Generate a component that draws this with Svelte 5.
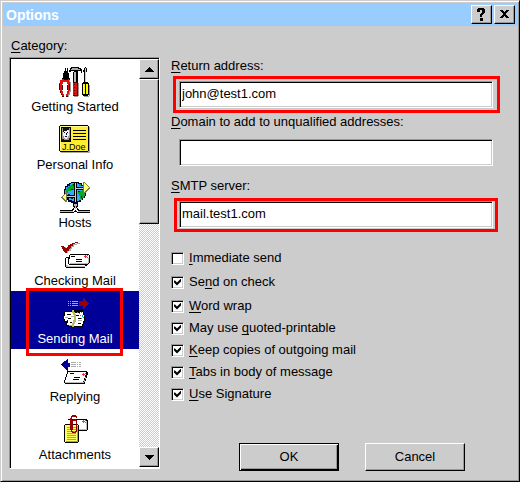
<script>
  let selected = $state('Sending Mail');
  let returnAddress = $state('john@test1.com');
  let domain = $state('');
  let smtpServer = $state('mail.test1.com');

  const categories = [
    'Getting Started',
    'Personal Info',
    'Hosts',
    'Checking Mail',
    'Sending Mail',
    'Replying',
    'Attachments'
  ];

  // label is split around its underlined access key
  let options = $state([
    { before: '', key: 'I', after: 'mmediate send', checked: false },
    { before: 'Se', key: 'n', after: 'd on check', checked: true },
    { before: '', key: 'W', after: 'ord wrap', checked: true },
    { before: 'May use ', key: 'q', after: 'uoted-printable', checked: true },
    { before: '', key: 'K', after: 'eep copies of outgoing mail', checked: true },
    { before: '', key: 'T', after: 'abs in body of message', checked: true },
    { before: '', key: 'U', after: 'se Signature', checked: true }
  ]);
</script>

{#snippet icon(name)}
  <svg class="icon" viewBox="0 0 32 32" width="32" height="32" shape-rendering="crispEdges" aria-hidden="true">
    {#if name === 'Getting Started'}
      <!-- pliers -->
      <path d="M6 2h1v3h1V2h1v5h1v5h1v2H3v-2h1V7h1V5h1z" fill="#000" />
      <path d="M10 14h1v2h1v10h-1v3h-1v2H7v-1h2v-2h1z" fill="#999" />
      <path d="M3 13h2v1h4v-1h1v3h1v9h-1v3H9v2H7v-2h1v-3h1v-7H8v-2H4v2H3v7h1v3h1v2H3v-2H2v-2H1v-3H0v-6h1v-3h2z" fill="#e01010" />
      <path d="M0 18h1v6H0zM1 25h1v2H1zM2 28h1v1H2zM3 30h2v1H3zM7 30h2v1H7zM3 19h1v5H3zM8 19h1v5H8zM10 18h1v6h-1z" fill="#500" />
      <!-- hammer -->
      <path d="M12 1h8v1h2v1h1v4h-1V5h-3v2h-4V5h-3v1h-2V4h1V2h1z" fill="#000" />
      <path d="M13 2h6v1h2v1h-9V3h1z" fill="#aaa" />
      <path d="M14 6h5v10h-5z" fill="#000" />
      <path d="M15 6h2v10h-2z" fill="#bbb" />
      <path d="M19 17h1v13h-1v1h-4v-1h4z" fill="#999" />
      <path d="M14 16h5v14h-5z" fill="#500" />
      <path d="M14 17h4v12h-4z" fill="#e01010" />
      <path d="M15 18h1v1h-1zM15 21h1v1h-1zM15 24h1v1h-1zM15 27h1v1h-1z" fill="#600" />
      <!-- screwdriver -->
      <path d="M25 2h1V1h1v1h1v4h-1v10h-2V6h-1z" fill="#000" />
      <path d="M26 2h1v14h-1z" fill="#ccc" />
      <path d="M30 19h1v11h-1v1h-5v-1h5z" fill="#999" />
      <path d="M24 16h5v1h1v12h-1v1h-5v-1h-1V17h1z" fill="#000" />
      <path d="M24 18h2v10h-2zM27 18h2v10h-2z" fill="#ff0" />
    {:else if name === 'Personal Info'}
      <path d="M2 3h29v26H2z" fill="#aaa" />
      <path d="M1 1h28v1h1v25h-1v1H1v-1H0V2h1z" fill="#000" />
      <path d="M1 2h28v25H1z" fill="#ffee30" />
      <path d="M1 2h28v1H1zM1 3h1v23H1z" fill="#ffff90" />
      <path d="M2 3h10v15H2z" fill="#000" />
      <path d="M3 4h8v13H3z" fill="#999" />
      <path d="M5 5h4v1h1v6H9v2H8v1H6v-1H5v-2H4V7h1z" fill="#eef" />
      <path d="M4 4h6v2H8v1H5v1H4zM5 8h1v1H5zM8 8h1v1H8zM7 9h1v2H7zM6 12h2v1H6zM3 15h2v1h5v-2h1v3H3z" fill="#111" />
      <path d="M14 6h13v1H14zM14 9h13v1H14zM14 12h13v1H14zM14 15h13v1H14z" fill="#000" />
      <text x="3" y="26" font-size="9" fill="#000">J.Doe</text>
    {:else if name === 'Hosts'}
      <path d="M12 0h8v1h3v2h2v2h1v2h1v7h-1v2h-2v2h-2v2h-3v1h-7v-1H9v-2H7v-2H6v-2H5V7h1V4h2V2h2V1h2z" fill="#003" />
      <path d="M12 1h7v1h3v2h2v3h2v6h-1v3h-2v2h-3v1h-7v-1h-3v-2H8v-2H6V8h1V5h2V3h2V2h1z" fill="#3af" />
      <path d="M10 3h3V2h3v3h-1v3h-3v1H9v2H7V7h1V5h2zM20 2h2v2h-2zM20 9h3v-1h3v6h-1v2h-2v1h-2v-3h-1v-2h-1v-2h1z" fill="#0a2" />
      <path d="M9 3h2v1H9zM14 2h2v2h-2zM12 7h2v1h-2zM19 9h2v1h-2zM22 14h1v2h-1zM9 12h2v1H9zM12 16h2v1h-2z" fill="#023" />
      <path d="M15 0h3v20h-3zM17 5h8v3h-8zM8 13h8v3H8z" fill="#000" />
      <path d="M16 1h1v19h-1zM17 6h8v1h-8zM8 14h8v1H8z" fill="#ccc" />
      <path d="M24 0h2v1h1v1h1v1h1v1h1v1h1v2h-1v1h-1v1h-1v1h-1v1h-1v1h-2z" fill="#774" />
      <path d="M25 1h1v1h1v1h1v1h1v1h1v1h-1v1h-1v1h-1v1h-1v1h-1z" fill="#ffff70" />
      <path d="M8 10H7v1H6v1H5v1H4v1H3v1H2v1h1v1h1v1h1v1h1v1h2z" fill="#774" />
      <path d="M7 12H6v1H5v1H4v2h1v1h1v1h1z" fill="#ffff70" />
      <path d="M14 21h5v4h-1v1h1v1h1v1h11v1H19v-1h-1v-2h-3v2h-1v1H1v-1h12v-1h1v-1h1v-1h-1z" fill="#000" />
      <path d="M15 22h3v2h-3zM16 24h1v3h-1zM1 29h13v1H1zM19 29h12v1H19z" fill="#bbb" />
      <path d="M1 30h14v-1h1v-1h1v1h1v1h13v1H18v-1h-3v1H1z" fill="#000" />
    {:else if name === 'Checking Mail'}
      <path d="M4 7h3v2h2V7h2V5h3V4h4V3h3v1h-3v1h-3v2h-2v2h-1v2H9v2H7v-1H6v-2H5z" fill="#aaa" />
      <path d="M2 6h3v1h1v1h2V7h1V5h2V4h2V3h3V2h3v1h-3v1h-2v2h-2v2h-1v1h-1v2H8v2H6v-1H5v-1H4v-2H3V7H2z" fill="#900" />
      <path d="M7 17h20v2h1v7h-2v2H7v-1H6v-9h1z" fill="#000" />
      <path d="M7 18h19v8H7z" fill="#fff" />
      <path d="M7 27h19v-1H9v-1H7z" fill="#bbb" />
      <path d="M11 14h19v1h1v8h-1v1h-1v1H10v-1H9v-6h1v-3h1z" fill="#000" />
      <path d="M11 15h19v8h-1v1H10v-5h1z" fill="#fff" />
      <path d="M11 23h18v1H11zM29 18h1v5h-1z" fill="#bbb" />
      <path d="M12 16h4v1h-4zM17 19h6v1h-6zM17 21h6v1h-6z" fill="#000" />
      <path d="M26 15h1v1h1v1h-1v1h-1v-1h-1v-1h1zM28 15h1v1h-1zM28 17h1v1h-1z" fill="#e33" />
    {:else if name === 'Sending Mail'}
      <path d="M9 3h1v1H9zM11 3h1v1h-1zM13 3h6v1h-6zM9 5h1v1H9zM11 5h1v1h-1zM13 5h6v1h-6zM9 7h1v1H9zM11 7h1v1h-1zM13 7h6v1h-6z" fill="#aaa" />
      <path d="M24 0h1v1h1v1h1v1h1v1h1v1h1v1h-1v1h-1v1h-1v1h-1v1h-1v1h-1V8h-4V3h4z" fill="#900" />
      <path d="M6 13h8v-1h10v2h1v3h1v7h-1v2h-1v3H10v-1H7v-4H5v-3H4v-4h1v-4h1z" fill="#000" />
      <path d="M6 14h7v1h8v-1h3v3h1v6h-1v3h-1v2H10v-1H8v-4H6v-2H5v-3h1z" fill="#fff" />
      <path d="M8 16h4v1H8zM9 20h3v1H9zM8 22h1v3H8zM11 24h2v1h-2zM17 17h3v1h-3zM19 20h3v1h-3zM19 25h3v1h-3z" fill="#000" />
      <path d="M6 19h3v1H6zM12 18h3v1h-3zM19 22h4v1h-4zM10 27h5v1h-5z" fill="#aaa" />
      <path d="M18 14h1v1h-1zM20 15h1v1h-1zM22 14h1v1h-1zM21 17h1v1h-1zM23 17h1v2h-1zM22 20h1v1h-1zM24 19h1v1h-1z" fill="#0aa" />
      <path d="M13 12h2v2h1v2h1v8h-1v2h-1v3h-2v-4h1v-3h1v-5h-1v-2h-1z" fill="#bb6" />
    {:else if name === 'Replying'}
      <path d="M8 3h1v4h2v4H9v4H8v-1H7v-1H6v-1H5v-1H4v-1H3V9H2V8h1V7h1V6h1V5h2V4h1z" fill="#009" />
      <path d="M12 6h5v1h-5zM18 6h1v1h-1zM20 6h2v1h-2zM12 8h5v1h-5zM18 8h1v1h-1zM20 8h2v1h-2zM12 10h5v1h-5zM18 10h1v1h-1zM20 10h2v1h-2z" fill="#aaa" />
      <path d="M9 15h19v1h1v3h-1v3h-1v3h-1v3H6v-1H5v-3h1v-3h1v-3h1v-3h1z" fill="#000" />
      <path d="M9 16h18v3h-1v3h-1v3h-1v1H6v-2h1v-3h1v-3h1z" fill="#fff" />
      <path d="M6 26h19v1H6zM26 21h1v2h-1zM25 24h1v2h-1z" fill="#bbb" />
      <path d="M11 17h4v1h-4zM15 21h6v1h-6zM14 23h6v1h-6z" fill="#000" />
      <path d="M24 17h1v1h1v1h-1v1h-1v-1h-1v-1h1zM26 17h1v1h-1z" fill="#e33" />
    {:else if name === 'Attachments'}
      <path d="M9 5h19v1h1v10h-1v1H9z" fill="#000" />
      <path d="M9 6h18v9H9z" fill="#fff" />
      <path d="M27 7h1v9H17v-1h10z" fill="#bbb" />
      <path d="M24 6h1v1h1v1h-1v1h-1V8h-1V7h1zM26 6h1v1h-1zM26 8h1v1h-1z" fill="#0aa" />
      <path d="M6 10h13v1h1v17h-1v1H6v-1H5V11h1z" fill="#000" />
      <path d="M6 11h13v17H6z" fill="#ffff60" />
      <path d="M8 13h9v1H8zM8 15h9v1H8zM8 17h9v1H8zM8 19h9v1H8zM8 21h9v1H8zM8 23h9v1H8zM8 25h9v1H8zM18 12h1v16H7v-1h11z" fill="#aa3" />
      <path d="M13 1h4v1h1v2h-1V3h-4v1h-1V2h1zM11 4h2v13h1v1h2v-1h1V7h-3v9h-1V6h1V5h3v1h1v12h-1v1h-4v-1h-1v-2h-1z" fill="#900" />
    {/if}
  </svg>
{/snippet}

<form class="dialog" onsubmit={(e) => e.preventDefault()}>
  <header>
    <h1>Options</h1>
    <button type="button" class="tool" aria-label="Help">
      <svg viewBox="0 0 15 13" width="15" height="13" shape-rendering="crispEdges">
        <path d="M4 0h6v1h1v4h-1v1H9v1H8v2H6V6h1V5h1V2H6v2H3V1h1zM6 10h3v3H6z" />
      </svg>
    </button>
    <button type="button" class="tool" aria-label="Close">
      <svg viewBox="0 0 15 13" width="15" height="13" shape-rendering="crispEdges">
        <path d="M3 2h3v1h1v1h1V3h1V2h3v1h-1v1h-1v1H9v2h1v1h1v1h1v1H9V9H8V8H7v1H6v1H3V9h1V8h1V7h1V5H5V4H4V3H3z" />
      </svg>
    </button>
  </header>

  <div class="body">
    <section class="sidebar">
      <span class="caption" id="category"><u>C</u>ategory:</span>
      <div class="listbox">
        <ul aria-labelledby="category">
          {#each categories as name}
            <li class:marked={name === 'Sending Mail'}>
              <button type="button" class="item" class:selected={selected === name} onclick={() => (selected = name)}>
                {@render icon(name)}
                <span>{name}</span>
              </button>
            </li>
          {/each}
        </ul>
        <div class="scrollbar">
          <button type="button" class="arrow" aria-label="Scroll up">
            <svg viewBox="0 0 9 5" width="9" height="5" shape-rendering="crispEdges"><path d="M4 0h1v1h1v1h1v1h1v1h1v1H0V4h1V3h1V2h1V1h1z" /></svg>
          </button>
          <div class="thumb"></div>
          <button type="button" class="arrow last" aria-label="Scroll down">
            <svg viewBox="0 0 9 5" width="9" height="5" shape-rendering="crispEdges"><path d="M0 0h9v1H8v1H7v1H6v1H5v1H4V4H3V3H2V2H1V1H0z" /></svg>
          </button>
        </div>
      </div>
    </section>

    <section class="settings">
      <label for="return"><u>R</u>eturn address:</label>
      <div class="field marked">
        <input id="return" type="text" bind:value={returnAddress} />
      </div>
      <label for="domain"><u>D</u>omain to add to unqualified addresses:</label>
      <div class="field plain">
        <input id="domain" type="text" bind:value={domain} />
      </div>
      <label for="smtp"><u>S</u>MTP server:</label>
      <div class="field marked tight">
        <input id="smtp" type="text" bind:value={smtpServer} />
      </div>

      <div class="checks">
        {#each options as option}
          <label class="check">
            <input type="checkbox" bind:checked={option.checked} />
            <span>{option.before}<u>{option.key}</u>{option.after}</span>
          </label>
        {/each}
      </div>

      <div class="actions">
        <button type="submit" class="default">OK</button>
        <button type="button">Cancel</button>
      </div>
    </section>
  </div>
</form>

<style>
  .dialog {
    box-sizing: border-box;
    padding: 2px 1px 1px 2px;
    background: #ccc;
    border: 1px solid #000;
    border-top-color: #ccc;
    border-left-color: #ccc;
    box-shadow: inset 1px 1px #fff, inset -1px -1px #999;
    font: 13px/16px "Liberation Sans", Arial, sans-serif;
    color: #000;
  }
  button, input {
    box-sizing: border-box;
    margin: 0;
    font: inherit;
    color: inherit;
    border-radius: 0;
  }
  u {
    text-decoration: underline;
    text-underline-offset: 2px;
    text-decoration-skip-ink: none;
  }

  header {
    display: flex;
    align-items: center;
    gap: 2px;
    height: 23px;
    padding: 0 3px;
    background: #9cf;
  }
  h1 {
    flex: 1;
    margin: 0;
    font-size: 14px;
    line-height: 16px;
    color: #fff;
  }

  .tool, .arrow, .thumb, .actions button {
    background: #ccc;
    border: 1px solid #000;
    border-top-color: #fff;
    border-left-color: #fff;
    box-shadow: inset -1px -1px #999;
  }
  .tool, .arrow {
    display: flex;
    align-items: center;
    justify-content: center;
    padding: 0;
  }
  .tool {
    width: 21px;
    height: 19px;
  }

  .body {
    display: flex;
    gap: 11px;
    padding: 0 25px 0 6px;
  }
  .sidebar {
    padding: 12px 0 11px;
  }
  .caption {
    display: block;
    margin: 0 0 3px 2px;
  }
  .listbox {
    display: flex;
    width: 151px;
    box-sizing: border-box;
    border: 1px solid #fff;
    border-top-color: #999;
    border-left-color: #999;
    background: #fff;
    box-shadow: inset 1px 1px #000;
    padding: 1px 0 1px 1px;
  }
  ul {
    flex: 1;
    margin: 0;
    padding: 0 0 2px;
    list-style: none;
  }
  li {
    position: relative;
  }
  .item {
    display: flex;
    flex-direction: column;
    align-items: center;
    gap: 1px;
    width: 100%;
    height: 58px;
    padding: 7px 0 0;
    border: 0;
    background: none;
    white-space: nowrap;
  }
  .item.selected {
    background: #009;
    color: #fff;
  }
  .icon {
    flex: none;
    display: block;
  }

  .scrollbar {
    display: flex;
    flex-direction: column;
    width: 20px;
    background: repeating-conic-gradient(#ccc 0 25%, #fff 0 50%) 0 0 / 2px 2px;
  }
  .arrow {
    height: 20px;
  }
  .arrow.last {
    margin-top: auto;
  }
  .thumb {
    height: 143px;
  }

  .settings {
    flex: 1;
    display: flex;
    flex-direction: column;
    padding: 32px 0 9px;
  }
  .field {
    position: relative;
    margin: 7px 0 6px 8px;
  }
  .field.plain {
    margin: 9px 0 12px 8px;
  }
  .field input {
    display: block;
    width: 100%;
    height: 27px;
    padding: 0 2px 2px;
    background: #fff;
    border: 1px solid #fff;
    border-top-color: #999;
    border-left-color: #999;
    box-shadow: inset 1px 1px #000, inset -1px -1px #ccc;
    outline: 0;
  }
  .marked::after {
    content: "";
    position: absolute;
    inset: -5px -7px -5px -6px;
    border: 3px solid #f00;
    pointer-events: none;
  }
  .marked.tight::after {
    inset: -3px -5px -4px -5px;
  }
  li.marked::after {
    inset: -3px 16px -7px 15px;
    z-index: 1;
  }

  .checks {
    padding-top: 13px;
  }
  .check {
    display: flex;
    align-items: center;
    gap: 5px;
    height: 22px;
  }
  .check:nth-child(-n + 2) {
    margin-bottom: 2px;
  }
  .check input {
    appearance: none;
    width: 13px;
    height: 13px;
    background: #fff;
    border: 1px solid #fff;
    border-top-color: #999;
    border-left-color: #999;
    box-shadow: inset 1px 1px #000, inset -1px -1px #ccc;
  }
  .check input:checked::before {
    content: "";
    display: block;
    width: 7px;
    height: 7px;
    margin: 2px;
    background: #000;
    clip-path: polygon(0 2px, 1px 2px, 3px 4px, 7px 0, 7px 3px, 3px 7px, 0 4px);
  }

  .actions {
    display: flex;
    justify-content: flex-end;
    gap: 26px;
    margin-top: auto;
    padding-right: 28px;
  }
  .actions button {
    width: 100px;
    height: 28px;
    padding: 0;
  }
  .actions .default {
    border-color: #000;
    box-shadow: inset 1px 1px #fff, inset -1px -1px #000, inset -2px -2px #999;
  }
</style>
